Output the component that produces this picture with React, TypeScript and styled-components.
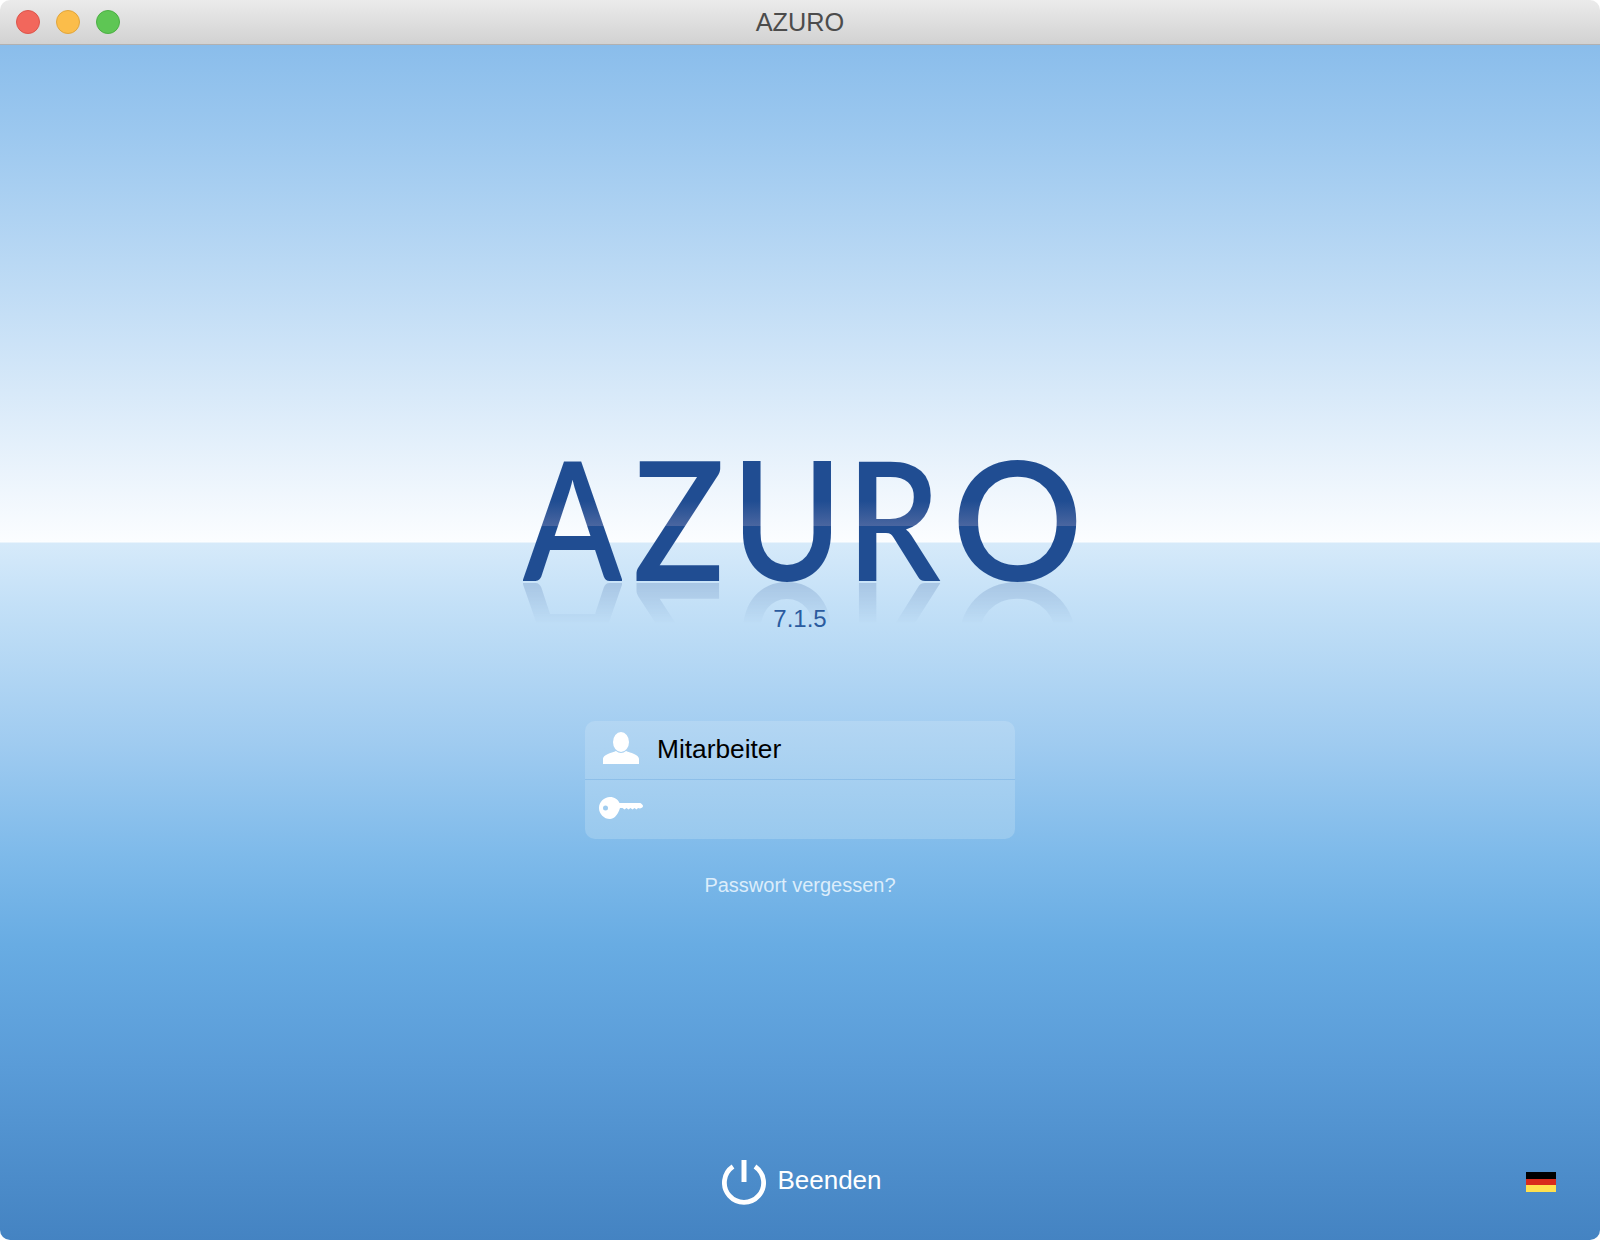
import React from 'react';
import styled, { createGlobalStyle } from 'styled-components';

const GlobalStyle = createGlobalStyle`
  html, body {
    margin: 0;
    padding: 0;
    background: #fff;
  }
  body {
    font-family: "Liberation Sans", Arial, sans-serif;
  }
`;

const Window = styled.div`
  width: 1600px;
  height: 1240px;
  display: flex;
  flex-direction: column;
  border-radius: 10px;
  overflow: hidden;
`;

const TitleBar = styled.header`
  position: relative;
  flex: 0 0 44px;
  box-sizing: border-box;
  display: flex;
  align-items: center;
  justify-content: center;
  background: linear-gradient(#ebebeb, #d2d2d2);
  border-bottom: 1px solid #b1b1b1;
`;

const TrafficLights = styled.div`
  position: absolute;
  left: 16px;
  top: 10px;
  display: flex;
  gap: 16px;
`;

const Light = styled.span<{ $fill: string; $edge: string }>`
  box-sizing: border-box;
  width: 24px;
  height: 24px;
  border-radius: 50%;
  background: ${props => props.$fill};
  border: 1px solid ${props => props.$edge};
`;

const Title = styled.div`
  font-size: 25.3px;
  line-height: 44px;
  color: #4c4c4c;
`;

const Main = styled.main`
  flex: 1;
  display: flex;
  flex-direction: column;
  align-items: center;
  background: linear-gradient(
    #8abdeb 0,
    #9cc8ef 90px,
    #c5dff6 270px,
    #e4f0fb 400px,
    #fbfdff 496px,
    #fdfeff 497px,
    #d6eafa 498px,
    #c3e0f7 560px,
    #9fcbf0 700px,
    #7ebaea 810px,
    #68ace3 900px,
    #5a9cd8 1020px,
    #4483c2 1196px
  );
`;

const Logo = styled.div`
  position: relative;
  margin-top: 398px;
`;

const LetterRow = styled.div<{ $reflected?: boolean }>`
  display: flex;
  height: 148px;
  ${props =>
    props.$reflected
      ? `
    position: absolute;
    left: 0;
    top: 130px;
    transform: scaleY(-1);
    opacity: 0.2;
    mask-image: linear-gradient(to top, #000 9px, transparent 51px);
    -webkit-mask-image: linear-gradient(to top, #000 9px, transparent 51px);
  `
      : ''}
`;

const LetterCell = styled.div<{ $width: number; $gap: number }>`
  flex: 0 0 ${props => props.$width}px;
  min-width: 0;
  margin-left: ${props => props.$gap}px;
  display: flex;
  justify-content: center;
`;

const Glyph = styled.span<{ $scale: number; $reflected?: boolean }>`
  font-family: Lato, sans-serif;
  font-size: 165px;
  line-height: 148px;
  font-weight: 600;
  height: 148px;
  transform: scaleX(${props => props.$scale});
  color: transparent;
  background: ${props =>
    props.$reflected
      ? '#204d92'
      : 'linear-gradient(#204d92 0, #204d92 58px, #4a66a0 83px, #204d92 83.5px, #204d92 100%)'};
  background-clip: text;
  -webkit-background-clip: text;
`;

const Version = styled.div`
  position: relative;
  margin-top: 14px;
  font-size: 24px;
  line-height: 28px;
  color: #2b5b9f;
`;

const LoginBox = styled.div`
  margin-top: 88px;
  width: 430px;
  border-radius: 10px;
  overflow: hidden;
  background: linear-gradient(#b3d6f3, #99c9ee);
`;

const LoginRow = styled.div<{ $divided?: boolean }>`
  box-sizing: border-box;
  height: ${props => (props.$divided ? 60 : 58)}px;
  display: flex;
  align-items: center;
  border-top: ${props => (props.$divided ? '1px solid #8dbfe9' : 'none')};
`;

const IconCell = styled.div<{ $lift: number }>`
  flex: 0 0 72px;
  display: flex;
  justify-content: center;
  padding-bottom: ${props => props.$lift}px;
`;

const UserName = styled.div`
  font-size: 26.3px;
  color: #000;
  margin-bottom: 2px;
`;

const ForgotLink = styled.a`
  margin-top: 34px;
  font-size: 20px;
  line-height: 24px;
  color: #dcedfb;
`;

const Footer = styled.footer`
  margin-top: auto;
  align-self: stretch;
  box-sizing: border-box;
  height: 80px;
  display: grid;
  grid-template-columns: 1fr auto 1fr;
  align-items: start;
`;

const QuitButton = styled.div`
  grid-column: 2;
  margin-left: 4px;
  display: flex;
  align-items: flex-start;
  gap: 11px;
  color: #fff;
  font-size: 26px;
  line-height: 40px;
`;

const Flag = styled.div`
  grid-column: 3;
  justify-self: end;
  margin: 12px 44px 0 0;
  width: 30px;
  height: 20px;
  background: linear-gradient(
    #000 0 33%,
    #d92b1c 33% 66%,
    #ffe04f 66% 100%
  );
`;

const LETTERS = [
  { char: 'A', width: 103, gap: 0, scale: 0.88 },
  { char: 'Z', width: 88, gap: 10, scale: 0.92 },
  { char: 'U', width: 91, gap: 19, scale: 0.91 },
  { char: 'R', width: 81, gap: 20, scale: 0.9 },
  { char: 'O', width: 122, gap: 23, scale: 0.99 },
];

const Wordmark = ({ reflected = false }: { reflected?: boolean }) => (
  <LetterRow $reflected={reflected} aria-hidden={reflected || undefined}>
    {LETTERS.map(letter => (
      <LetterCell key={letter.char} $width={letter.width} $gap={letter.gap}>
        <Glyph $scale={letter.scale} $reflected={reflected}>
          {letter.char}
        </Glyph>
      </LetterCell>
    ))}
  </LetterRow>
);

const UserIcon = () => (
  <svg width="38" height="32" viewBox="0 0 38 32" fill="#fff">
    <ellipse cx="19" cy="10" rx="8" ry="10" />
    <path d="M1 32v-5c0-3 4-5 9-6.500 2-.6 3-1 4-1.500 1.500 1.300 3 2 5 2s3.500-.7 5-2c1 .5 2 .9 4 1.500 5 1.500 9 3.500 9 6.500v5z" />
  </svg>
);

const KeyIcon = () => (
  <svg width="44" height="22" viewBox="0 0 44 22" fill="#fff">
    <path
      fillRule="evenodd"
      d="M11 0c4.500 0 8 2.500 9.500 6H41c1 0 3 2 3 3s-1 2-3 2.500l-2-.5-1.500 1.500-2-1.500-2 1.500-2-1.500-2 1.500-2-1.500-2 1.500-2-1.500h-2.500C18.500 18.500 15 22 11 22 5 22 0 17 0 11S5 0 11 0zM6.500 8.500a2.500 2.500 0 1 0 0 5 2.500 2.500 0 0 0 0-5z"
    />
  </svg>
);

const PowerIcon = () => (
  <svg width="44" height="46" viewBox="0 0 44 46" fill="none" stroke="#fff" strokeWidth="4.800">
    <path d="M11 6.500A19.600 19.600 0 1 0 33 6.500" />
    <path d="M22 0v22" strokeWidth="5" />
  </svg>
);

export default function App() {
  return (
    <>
      <GlobalStyle />
      <Window>
        <TitleBar>
          <TrafficLights>
            <Light $fill="#f2675c" $edge="#dc554b" />
            <Light $fill="#fbbd4a" $edge="#e0a53c" />
            <Light $fill="#5ec654" $edge="#4caf44" />
          </TrafficLights>
          <Title>AZURO</Title>
        </TitleBar>
        <Main>
          <Logo>
            <Wordmark />
            <Wordmark reflected />
          </Logo>
          <Version>7.1.5</Version>
          <LoginBox>
            <LoginRow>
              <IconCell $lift={5}>
                <UserIcon />
              </IconCell>
              <UserName>Mitarbeiter</UserName>
            </LoginRow>
            <LoginRow $divided>
              <IconCell $lift={3}>
                <KeyIcon />
              </IconCell>
            </LoginRow>
          </LoginBox>
          <ForgotLink>Passwort vergessen?</ForgotLink>
          <Footer>
            <QuitButton>
              <PowerIcon />
              Beenden
            </QuitButton>
            <Flag />
          </Footer>
        </Main>
      </Window>
    </>
  );
}
